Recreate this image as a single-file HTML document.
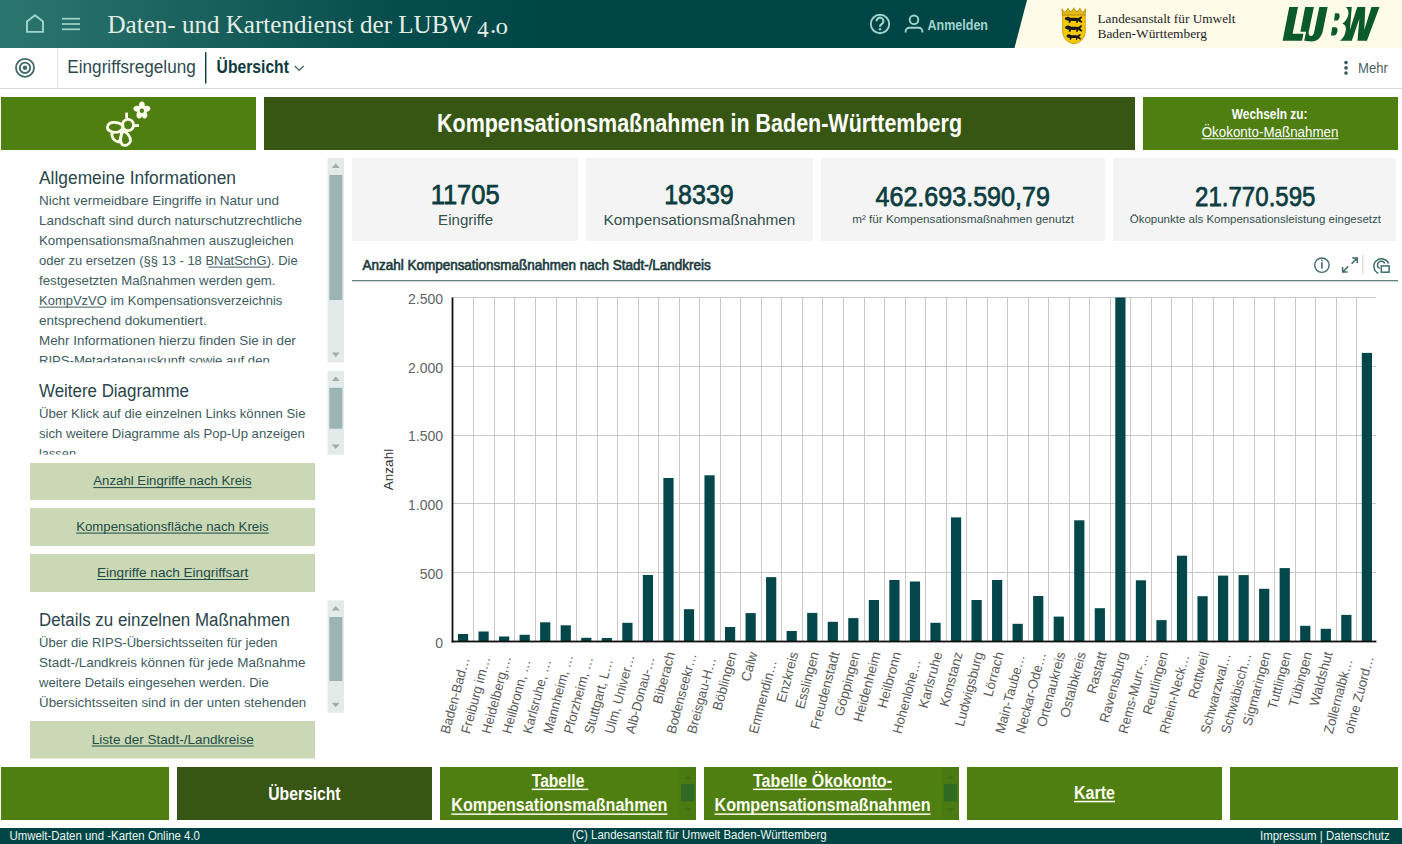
<!DOCTYPE html><html><head><meta charset="utf-8"><title>Kompensationsmaßnahmen</title>
<style>html,body{margin:0;padding:0;background:#fff;overflow:hidden}svg{display:block;font-family:"Liberation Sans",sans-serif}</style></head><body>
<svg width="1402" height="844" viewBox="0 0 1402 844">
<defs><linearGradient id="hg" x1="0" y1="0" x2="1402" y2="0" gradientUnits="userSpaceOnUse"><stop offset="0" stop-color="#2c7670"/><stop offset="0.143" stop-color="#1a605c"/><stop offset="0.285" stop-color="#064c4c"/><stop offset="0.42" stop-color="#004545"/><stop offset="1" stop-color="#004646"/></linearGradient><clipPath id="c1"><rect x="0" y="158" width="326" height="204.5"/></clipPath><clipPath id="c2"><rect x="0" y="371" width="326" height="83.5"/></clipPath><clipPath id="c3"><rect x="0" y="600.5" width="326" height="112"/></clipPath></defs>
<rect x="0" y="0" width="1402" height="844" fill="#ffffff"/>
<rect x="0" y="0" width="1402" height="48" fill="url(#hg)"/>
<polygon points="1027,0 1402,0 1402,48 1014.5,48" fill="#fffbe9"/>
<path d="M27,31.9 V21.4 L35,15.3 L43,21.4 V31.9 Z" fill="none" stroke="#a2d3cd" stroke-width="1.9" stroke-linejoin="miter"/>
<rect x="62" y="17.849999999999998" width="18" height="1.7" fill="#a2d3cd"/>
<rect x="62" y="23.15" width="18" height="1.7" fill="#a2d3cd"/>
<rect x="62" y="28.45" width="18" height="1.7" fill="#a2d3cd"/>
<text x="107.50" y="33.00" font-size="26" font-family="Liberation Serif" fill="#e4eee6" textLength="364.50" lengthAdjust="spacingAndGlyphs">Daten- und Kartendienst der LUBW</text>
<text x="477.20" y="37.30" font-size="22.5" font-family="Liberation Serif" fill="#e4eee6" textLength="11.40" lengthAdjust="spacingAndGlyphs">4</text>
<text x="490.00" y="33.30" font-size="25" font-family="Liberation Serif" fill="#e4eee6">.</text>
<text x="495.50" y="33.50" font-size="16.5" font-family="Liberation Serif" fill="#e4eee6" textLength="12.50" lengthAdjust="spacingAndGlyphs">0</text>
<circle cx="880" cy="24" r="9.2" fill="none" stroke="#a2d3cd" stroke-width="1.9"/>
<path d="M876.6,21.2 a3.4,3.4 0 1 1 5.2,2.8 c-1.3,0.8 -1.8,1.4 -1.8,2.8" fill="none" stroke="#a2d3cd" stroke-width="2.2"/>
<circle cx="880" cy="29.2" r="1.25" fill="#a2d3cd"/>
<circle cx="914" cy="19.8" r="4.3" fill="none" stroke="#a2d3cd" stroke-width="1.9"/>
<path d="M905.6,32.6 v-1.2 a3.6,3.6 0 0 1 3.6,-3.6 h9.6 a3.6,3.6 0 0 1 3.6,3.6 v1.2" fill="none" stroke="#a2d3cd" stroke-width="1.9"/>
<text x="927.50" y="29.50" font-size="15" font-weight="bold" fill="#a2d3cd" textLength="60.50" lengthAdjust="spacingAndGlyphs">Anmelden</text>
<g><path d="M1062.4,15.2 L1062,9.6 L1065,12.4 L1067.8,8.8 L1070.6,12 L1073.8,8.4 L1077,12 L1079.8,8.8 L1082.6,12.4 L1085.6,9.6 L1085.2,15.2 Z" fill="#e3b80f" stroke="#9c7a10" stroke-width="0.7"/><circle cx="1062.2" cy="9.4" r="0.9" fill="#d9ad10"/><circle cx="1067.8" cy="8.7" r="0.9" fill="#d9ad10"/><circle cx="1073.8" cy="8.3" r="0.9" fill="#d9ad10"/><circle cx="1079.8" cy="8.7" r="0.9" fill="#d9ad10"/><circle cx="1085.4" cy="9.4" r="0.9" fill="#d9ad10"/><path d="M1062.6,15.2 H1085.3 V31 C1085.3,38.2 1080,43.4 1074,43.7 C1068,43.4 1062.6,38.2 1062.6,31 Z" fill="#f6c800" stroke="#b88c00" stroke-width="0.7"/><path transform="translate(1064.6,16.4) scale(1.0,0.95)" d="M0.2,2.6 C0.4,1 1.8,0.2 3.4,0.3 C4.6,0.4 5.4,1 6,1.6 C8.5,1.4 11.5,1.6 13.8,1.8 C14.6,1.2 15.4,0.4 16.4,0 L17.8,0.6 C17.2,1.6 16.2,2.6 15.6,3.2 C16.2,4 17.2,4.8 18,5.6 L16.8,6.8 C15.6,6.2 14.6,5.4 13.6,4.8 L13,6.8 L11.4,6.8 L11.8,4.8 C9.5,4.9 7.8,4.8 6.4,4.6 L5.6,6.8 L3.8,6.8 L4.4,4.6 C2.2,4.4 0.2,3.8 0.2,2.6 Z" fill="#161616"/><path transform="translate(1064.9,25.3) scale(0.98,0.95)" d="M0.2,2.6 C0.4,1 1.8,0.2 3.4,0.3 C4.6,0.4 5.4,1 6,1.6 C8.5,1.4 11.5,1.6 13.8,1.8 C14.6,1.2 15.4,0.4 16.4,0 L17.8,0.6 C17.2,1.6 16.2,2.6 15.6,3.2 C16.2,4 17.2,4.8 18,5.6 L16.8,6.8 C15.6,6.2 14.6,5.4 13.6,4.8 L13,6.8 L11.4,6.8 L11.8,4.8 C9.5,4.9 7.8,4.8 6.4,4.6 L5.6,6.8 L3.8,6.8 L4.4,4.6 C2.2,4.4 0.2,3.8 0.2,2.6 Z" fill="#161616"/><path transform="translate(1066.4,34) scale(0.82,0.85)" d="M0.2,2.6 C0.4,1 1.8,0.2 3.4,0.3 C4.6,0.4 5.4,1 6,1.6 C8.5,1.4 11.5,1.6 13.8,1.8 C14.6,1.2 15.4,0.4 16.4,0 L17.8,0.6 C17.2,1.6 16.2,2.6 15.6,3.2 C16.2,4 17.2,4.8 18,5.6 L16.8,6.8 C15.6,6.2 14.6,5.4 13.6,4.8 L13,6.8 L11.4,6.8 L11.8,4.8 C9.5,4.9 7.8,4.8 6.4,4.6 L5.6,6.8 L3.8,6.8 L4.4,4.6 C2.2,4.4 0.2,3.8 0.2,2.6 Z" fill="#161616"/></g>
<text x="1097.50" y="23.00" font-size="13.5" font-family="Liberation Serif" fill="#1e1e1e" textLength="138.00" lengthAdjust="spacingAndGlyphs">Landesanstalt für Umwelt</text>
<text x="1097.50" y="37.80" font-size="13.5" font-family="Liberation Serif" fill="#1e1e1e" textLength="109.50" lengthAdjust="spacingAndGlyphs">Baden-Württemberg</text>
<g fill="#0b5a2c"><polygon points="1289.25,7.08 1298.02,7.08 1292.57,33.87 1303.47,33.87 1302.05,40.75 1282.61,40.75"/><path d="M1305.13,7.08 L1313.90,7.08 L1308.69,31.98 C1308.21,34.82 1309.40,36.01 1311.06,36.01 C1312.72,36.01 1313.66,34.35 1314.04,32.45 L1319.35,7.08 L1327.65,7.08 L1322.91,30.55 C1321.49,37.19 1317.93,41.46 1311.29,41.46 L1304.18,40.75 L1306.08,31.74 L1300.39,31.74 Z"/><path d="M1334.99,13.25 L1338.08,13.25 C1339.50,13.48 1339.98,15.38 1339.50,17.28 L1338.79,19.17 C1338.08,20.36 1336.89,20.60 1335.47,20.60 L1334.06,20.60 Z"/><path d="M1332.16,27.23 L1335.71,27.23 C1337.37,27.47 1337.85,29.60 1337.37,31.50 L1336.66,33.40 C1335.95,35.06 1334.53,35.53 1333.11,35.53 L1330.97,35.53 Z"/><path d="M1345.84,7.08 L1351.77,7.08 L1349.87,30.08 L1357.22,7.08 L1365.28,7.08 L1364.33,30.08 L1371.45,7.08 L1379.51,7.08 L1366.94,40.75 L1357.46,40.75 L1359.36,18.70 L1351.77,40.75 L1339.91,40.75 C1343.5,38.5 1346.2,33 1345.84,27.7 C1345.6,25.6 1344.2,24 1342.3,23.4 C1345.5,22 1348.6,17 1348.45,12.5 C1348.3,10 1347.2,8.2 1345.84,7.08 Z"/></g>
<rect x="0" y="88" width="1402" height="1" fill="#dadddd"/>
<rect x="57" y="48" width="1" height="40" fill="#dfe3e3"/>
<circle cx="25" cy="67.8" r="9" fill="none" stroke="#3f6a68" stroke-width="1.8"/>
<circle cx="25" cy="67.8" r="5.2" fill="none" stroke="#3f6a68" stroke-width="1.9"/>
<circle cx="25" cy="67.8" r="2.2" fill="#3f6a68"/>
<text x="67.30" y="73.00" font-size="18" fill="#2e4a50" textLength="128.50" lengthAdjust="spacingAndGlyphs">Eingriffsregelung</text>
<rect x="205" y="52.2" width="1.4" height="31.4" fill="#0d3b3f"/>
<text x="216.60" y="73.00" font-size="18" font-weight="bold" fill="#0f3a40" textLength="72.30" lengthAdjust="spacingAndGlyphs">Übersicht</text>
<path d="M294.8,66 L299.2,70.4 L303.6,66" fill="none" stroke="#3f5a5e" stroke-width="1.2"/>
<circle cx="1346" cy="62.6" r="1.8" fill="#3f5a5c"/>
<circle cx="1346" cy="67.9" r="1.8" fill="#3f5a5c"/>
<circle cx="1346" cy="73.1" r="1.8" fill="#3f5a5c"/>
<text x="1358.00" y="73.00" font-size="14" fill="#4b6064" textLength="29.80" lengthAdjust="spacingAndGlyphs">Mehr</text>
<rect x="1" y="97" width="255" height="53" fill="#4f7f10"/>
<rect x="264" y="97" width="871" height="53" fill="#375614"/>
<rect x="1143" y="97" width="255" height="53" fill="#4f7f10"/>
<text x="437.00" y="131.60" font-size="26" font-weight="bold" fill="#ffffff" textLength="525.00" lengthAdjust="spacingAndGlyphs">Kompensationsmaßnahmen in Baden-Württemberg</text>
<text x="1231.80" y="119.00" font-size="14" font-weight="bold" fill="#ffffff" textLength="75.60" lengthAdjust="spacingAndGlyphs">Wechseln zu:</text>
<text x="1201.70" y="136.60" font-size="14" fill="#ffffff" textLength="136.80" lengthAdjust="spacingAndGlyphs">Ökokonto-Maßnahmen</text>
<rect x="1201.70" y="138.30" width="136.80" height="1" fill="#ffffff"/>
<g fill="none" stroke="#fcfbec" stroke-width="2.8" stroke-linecap="butt"><circle cx="128" cy="125" r="5.6"/><line x1="126.6" y1="112.6" x2="126.6" y2="118.3"/><line x1="133.6" y1="125.6" x2="138.9" y2="125.6"/><path d="M123,125.5 C118,121.5 109,121 107.5,126.5 C106.5,131 113,133 118,132 C121,131.5 123,128.5 123,125.5 Z"/><path d="M112,131.5 C111,138 114.5,141.5 119,142 C121,139 122,133 121,129"/><path d="M123.5,131 C120.5,135 119.5,141 122,144.5 C125,146.5 129.5,145 130.5,141 C131,137.5 127,132 123.5,131 Z"/></g>
<g fill="#fcfbec"><path d="M141.9,101.6 C144,101.6 145,103.5 144.8,106.2 C147.5,105.3 150.3,106.3 150.4,108.6 C150.5,110.6 148.5,111.6 146.4,112 C147.8,114.3 147.8,117.4 145.3,118.4 C143.5,119 142.3,117.5 141.9,116 C141.5,117.5 140.3,119 138.5,118.4 C136,117.4 136,114.3 137.4,112 C135.3,111.6 133.3,110.6 133.4,108.6 C133.5,106.3 136.3,105.3 139,106.2 C138.8,103.5 139.8,101.6 141.9,101.6 Z"/></g>
<circle cx="141.9" cy="110.7" r="2.2" fill="#4f7f10"/>
<rect x="327.5" y="158" width="16.5" height="204.5" fill="#e3eaea"/>
<rect x="329.3" y="175" width="13" height="125" fill="#9db4b4"/>
<polygon points="331.75,168 339.75,168 335.75,163.5" fill="#a3abab"/>
<polygon points="331.75,352.5 339.75,352.5 335.75,357.0" fill="#a3abab"/>
<text x="39.00" y="184.00" font-size="18" fill="#2a454b" textLength="197.00" lengthAdjust="spacingAndGlyphs">Allgemeine Informationen</text>
<g clip-path="url(#c1)">
<text x="39.00" y="205.00" font-size="13" fill="#405c61" textLength="240.00" lengthAdjust="spacingAndGlyphs">Nicht vermeidbare Eingriffe in Natur und</text>
<text x="39.00" y="225.00" font-size="13" fill="#405c61" textLength="263.00" lengthAdjust="spacingAndGlyphs">Landschaft sind durch naturschutzrechtliche</text>
<text x="39.00" y="245.00" font-size="13" fill="#405c61" textLength="254.70" lengthAdjust="spacingAndGlyphs">Kompensationsmaßnahmen auszugleichen</text>
<text x="39.00" y="265.00" font-size="13" fill="#405c61" textLength="258.60" lengthAdjust="spacingAndGlyphs">oder zu ersetzen (§§ 13 - 18 BNatSchG). Die</text>
<text x="39.00" y="285.00" font-size="13" fill="#405c61" textLength="236.50" lengthAdjust="spacingAndGlyphs">festgesetzten Maßnahmen werden gem.</text>
<text x="39.00" y="305.00" font-size="13" fill="#405c61" textLength="243.30" lengthAdjust="spacingAndGlyphs">KompVzVO im Kompensationsverzeichnis</text>
<text x="39.00" y="325.00" font-size="13" fill="#405c61" textLength="167.70" lengthAdjust="spacingAndGlyphs">entsprechend dokumentiert.</text>
<text x="39.00" y="345.00" font-size="13" fill="#405c61" textLength="256.80" lengthAdjust="spacingAndGlyphs">Mehr Informationen hierzu finden Sie in der</text>
<text x="39.00" y="365.00" font-size="13" fill="#405c61" textLength="230.70" lengthAdjust="spacingAndGlyphs">RIPS-Metadatenauskunft sowie auf den</text>
</g>
<rect x="208.50" y="266.60" width="60.50" height="1" fill="#405c61"/>
<rect x="39.00" y="306.60" width="64.50" height="1" fill="#405c61"/>
<rect x="327.5" y="371" width="16.5" height="83.60000000000002" fill="#e3eaea"/>
<rect x="329.3" y="387.8" width="13" height="40.89999999999998" fill="#9db4b4"/>
<polygon points="331.75,381 339.75,381 335.75,376.5" fill="#a3abab"/>
<polygon points="331.75,444.6 339.75,444.6 335.75,449.1" fill="#a3abab"/>
<text x="39.00" y="397.00" font-size="18" fill="#2a454b" textLength="150.00" lengthAdjust="spacingAndGlyphs">Weitere Diagramme</text>
<g clip-path="url(#c2)">
<text x="39.00" y="418.40" font-size="13" fill="#405c61" textLength="266.50" lengthAdjust="spacingAndGlyphs">Über Klick auf die einzelnen Links können Sie</text>
<text x="39.00" y="438.40" font-size="13" fill="#405c61" textLength="265.80" lengthAdjust="spacingAndGlyphs">sich weitere Diagramme als Pop-Up anzeigen</text>
<text x="39.00" y="458.40" font-size="13" fill="#405c61" textLength="37.00" lengthAdjust="spacingAndGlyphs">lassen</text>
</g>
<rect x="30" y="463" width="285" height="37" fill="#cad8b5"/>
<text x="93.30" y="485.10" font-size="13" fill="#1f4c47" textLength="158.30" lengthAdjust="spacingAndGlyphs">Anzahl Eingriffe nach Kreis</text>
<rect x="93.30" y="487.10" width="158.30" height="1" fill="#1f4c47"/>
<rect x="30" y="508" width="285" height="38" fill="#cad8b5"/>
<text x="76.20" y="530.60" font-size="13" fill="#1f4c47" textLength="192.50" lengthAdjust="spacingAndGlyphs">Kompensationsfläche nach Kreis</text>
<rect x="76.20" y="532.60" width="192.50" height="1" fill="#1f4c47"/>
<rect x="30" y="554" width="285" height="38" fill="#cad8b5"/>
<text x="97.00" y="577.00" font-size="13" fill="#1f4c47" textLength="151.20" lengthAdjust="spacingAndGlyphs">Eingriffe nach Eingriffsart</text>
<rect x="97.00" y="579.00" width="151.20" height="1" fill="#1f4c47"/>
<rect x="327.5" y="600.5" width="16.5" height="112.29999999999995" fill="#e3eaea"/>
<rect x="329.3" y="617" width="13" height="64" fill="#9db4b4"/>
<polygon points="331.75,610.5 339.75,610.5 335.75,606.0" fill="#a3abab"/>
<polygon points="331.75,702.8 339.75,702.8 335.75,707.3" fill="#a3abab"/>
<text x="39.00" y="626.00" font-size="18" fill="#2a454b" textLength="250.80" lengthAdjust="spacingAndGlyphs">Details zu einzelnen Maßnahmen</text>
<g clip-path="url(#c3)">
<text x="39.00" y="647.20" font-size="13" fill="#405c61" textLength="238.50" lengthAdjust="spacingAndGlyphs">Über die RIPS-Übersichtsseiten für jeden</text>
<text x="39.00" y="667.20" font-size="13" fill="#405c61" textLength="266.40" lengthAdjust="spacingAndGlyphs">Stadt-/Landkreis können für jede Maßnahme</text>
<text x="39.00" y="687.20" font-size="13" fill="#405c61" textLength="229.70" lengthAdjust="spacingAndGlyphs">weitere Details eingesehen werden. Die</text>
<text x="39.00" y="707.20" font-size="13" fill="#405c61" textLength="267.30" lengthAdjust="spacingAndGlyphs">Übersichtsseiten sind in der unten stehenden</text>
<text x="39.00" y="727.20" font-size="13" fill="#405c61" textLength="80.00" lengthAdjust="spacingAndGlyphs">Liste verlinkt.</text>
</g>
<rect x="30" y="721" width="285" height="37.5" fill="#cad8b5"/>
<text x="91.80" y="743.50" font-size="13" fill="#1f4c47" textLength="161.90" lengthAdjust="spacingAndGlyphs">Liste der Stadt-/Landkreise</text>
<rect x="91.80" y="745.50" width="161.90" height="1" fill="#1f4c47"/>
<rect x="352" y="158" width="226" height="83" fill="#f4f4f4"/>
<rect x="586" y="158" width="227" height="83" fill="#f4f4f4"/>
<rect x="821" y="158" width="284" height="83" fill="#f4f4f4"/>
<rect x="1113" y="158" width="283" height="83" fill="#f4f4f4"/>
<text x="430.70" y="204.10" font-size="27.5" fill="#0b3d41" textLength="68.90" lengthAdjust="spacingAndGlyphs" stroke="#0b3d41" stroke-width="0.75">11705</text>
<text x="438.10" y="224.80" font-size="15.5" fill="#35504f" textLength="55.10" lengthAdjust="spacingAndGlyphs">Eingriffe</text>
<text x="664.20" y="204.10" font-size="27.5" fill="#0b3d41" textLength="69.50" lengthAdjust="spacingAndGlyphs" stroke="#0b3d41" stroke-width="0.75">18339</text>
<text x="603.60" y="224.80" font-size="15.5" fill="#35504f" textLength="191.70" lengthAdjust="spacingAndGlyphs">Kompensationsmaßnahmen</text>
<text x="875.50" y="206.20" font-size="27.5" fill="#0b3d41" textLength="174.40" lengthAdjust="spacingAndGlyphs" stroke="#0b3d41" stroke-width="0.75">462.693.590,79</text>
<text x="852.20" y="222.60" font-size="11.5" fill="#35504f" textLength="221.80" lengthAdjust="spacingAndGlyphs">m² für Kompensationsmaßnahmen genutzt</text>
<text x="1195.00" y="206.20" font-size="27.5" fill="#0b3d41" textLength="120.50" lengthAdjust="spacingAndGlyphs" stroke="#0b3d41" stroke-width="0.75">21.770.595</text>
<text x="1129.70" y="222.60" font-size="11.5" fill="#35504f" textLength="251.30" lengthAdjust="spacingAndGlyphs">Ökopunkte als Kompensationsleistung eingesetzt</text>
<text x="362.50" y="270.00" font-size="14" fill="#1d3c41" textLength="348.30" lengthAdjust="spacingAndGlyphs" stroke="#1d3c41" stroke-width="0.65">Anzahl Kompensationsmaßnahmen nach Stadt-/Landkreis</text>
<rect x="352" y="280" width="1046" height="1.3" fill="#65827f"/>
<circle cx="1321.9" cy="265.2" r="7.2" fill="none" stroke="#3f6b69" stroke-width="1.4"/>
<rect x="1321.1" y="262.2" width="1.6" height="6.4" fill="#3f6b69"/>
<rect x="1321.1" y="259.6" width="1.6" height="1.6" fill="#3f6b69"/>
<g fill="none" stroke="#3f6b69" stroke-width="1.5"><path d="M1351.6,263.7 L1357.2,258.1 M1352.2,258.1 H1357.2 V263.1"/><path d="M1348.2,266.4 L1342.6,272 M1342.6,267 V272 H1347.6"/></g>
<rect x="1362.3" y="254.7" width="1" height="19.7" fill="#c9d2d2"/>
<g fill="none" stroke="#3f6b69" stroke-width="1.5"><path d="M1378.3,273.2 A7.6,7.6 0 1 1 1388.6,263.6"/><path d="M1379.6,268.4 A3.8,3.8 0 1 1 1384.8,263.6"/></g>
<rect x="1381.3" y="265.9" width="7.8" height="6.3" fill="#fff" stroke="#3f6b69" stroke-width="1.5"/>
<rect x="452" y="572" width="924" height="1" fill="#c9c9c9"/>
<rect x="452" y="503" width="924" height="1" fill="#c9c9c9"/>
<rect x="452" y="435" width="924" height="1" fill="#c9c9c9"/>
<rect x="452" y="366" width="924" height="1" fill="#c9c9c9"/>
<rect x="452" y="297" width="924" height="1" fill="#c9c9c9"/>
<rect x="473" y="297" width="1" height="344" fill="#c9c9c9"/>
<rect x="494" y="297" width="1" height="344" fill="#c9c9c9"/>
<rect x="514" y="297" width="1" height="344" fill="#c9c9c9"/>
<rect x="535" y="297" width="1" height="344" fill="#c9c9c9"/>
<rect x="556" y="297" width="1" height="344" fill="#c9c9c9"/>
<rect x="576" y="297" width="1" height="344" fill="#c9c9c9"/>
<rect x="597" y="297" width="1" height="344" fill="#c9c9c9"/>
<rect x="617" y="297" width="1" height="344" fill="#c9c9c9"/>
<rect x="638" y="297" width="1" height="344" fill="#c9c9c9"/>
<rect x="658" y="297" width="1" height="344" fill="#c9c9c9"/>
<rect x="679" y="297" width="1" height="344" fill="#c9c9c9"/>
<rect x="699" y="297" width="1" height="344" fill="#c9c9c9"/>
<rect x="720" y="297" width="1" height="344" fill="#c9c9c9"/>
<rect x="740" y="297" width="1" height="344" fill="#c9c9c9"/>
<rect x="761" y="297" width="1" height="344" fill="#c9c9c9"/>
<rect x="781" y="297" width="1" height="344" fill="#c9c9c9"/>
<rect x="802" y="297" width="1" height="344" fill="#c9c9c9"/>
<rect x="822" y="297" width="1" height="344" fill="#c9c9c9"/>
<rect x="843" y="297" width="1" height="344" fill="#c9c9c9"/>
<rect x="864" y="297" width="1" height="344" fill="#c9c9c9"/>
<rect x="884" y="297" width="1" height="344" fill="#c9c9c9"/>
<rect x="905" y="297" width="1" height="344" fill="#c9c9c9"/>
<rect x="925" y="297" width="1" height="344" fill="#c9c9c9"/>
<rect x="946" y="297" width="1" height="344" fill="#c9c9c9"/>
<rect x="966" y="297" width="1" height="344" fill="#c9c9c9"/>
<rect x="987" y="297" width="1" height="344" fill="#c9c9c9"/>
<rect x="1007" y="297" width="1" height="344" fill="#c9c9c9"/>
<rect x="1028" y="297" width="1" height="344" fill="#c9c9c9"/>
<rect x="1048" y="297" width="1" height="344" fill="#c9c9c9"/>
<rect x="1069" y="297" width="1" height="344" fill="#c9c9c9"/>
<rect x="1089" y="297" width="1" height="344" fill="#c9c9c9"/>
<rect x="1110" y="297" width="1" height="344" fill="#c9c9c9"/>
<rect x="1130" y="297" width="1" height="344" fill="#c9c9c9"/>
<rect x="1151" y="297" width="1" height="344" fill="#c9c9c9"/>
<rect x="1171" y="297" width="1" height="344" fill="#c9c9c9"/>
<rect x="1192" y="297" width="1" height="344" fill="#c9c9c9"/>
<rect x="1213" y="297" width="1" height="344" fill="#c9c9c9"/>
<rect x="1233" y="297" width="1" height="344" fill="#c9c9c9"/>
<rect x="1254" y="297" width="1" height="344" fill="#c9c9c9"/>
<rect x="1274" y="297" width="1" height="344" fill="#c9c9c9"/>
<rect x="1295" y="297" width="1" height="344" fill="#c9c9c9"/>
<rect x="1315" y="297" width="1" height="344" fill="#c9c9c9"/>
<rect x="1336" y="297" width="1" height="344" fill="#c9c9c9"/>
<rect x="1356" y="297" width="1" height="344" fill="#c9c9c9"/>
<rect x="457.95" y="634.00" width="10.2" height="7.50" fill="#03474a"/>
<rect x="478.49" y="631.50" width="10.2" height="10.00" fill="#03474a"/>
<rect x="499.03" y="636.50" width="10.2" height="5.00" fill="#03474a"/>
<rect x="519.58" y="634.80" width="10.2" height="6.70" fill="#03474a"/>
<rect x="540.12" y="622.30" width="10.2" height="19.20" fill="#03474a"/>
<rect x="560.66" y="625.30" width="10.2" height="16.20" fill="#03474a"/>
<rect x="581.20" y="637.80" width="10.2" height="3.70" fill="#03474a"/>
<rect x="601.74" y="638.00" width="10.2" height="3.50" fill="#03474a"/>
<rect x="622.29" y="622.80" width="10.2" height="18.70" fill="#03474a"/>
<rect x="642.83" y="575.00" width="10.2" height="66.50" fill="#03474a"/>
<rect x="663.37" y="478.00" width="10.2" height="163.50" fill="#03474a"/>
<rect x="683.91" y="609.20" width="10.2" height="32.30" fill="#03474a"/>
<rect x="704.45" y="475.30" width="10.2" height="166.20" fill="#03474a"/>
<rect x="725.00" y="627.00" width="10.2" height="14.50" fill="#03474a"/>
<rect x="745.54" y="613.10" width="10.2" height="28.40" fill="#03474a"/>
<rect x="766.08" y="577.10" width="10.2" height="64.40" fill="#03474a"/>
<rect x="786.62" y="631.00" width="10.2" height="10.50" fill="#03474a"/>
<rect x="807.16" y="612.90" width="10.2" height="28.60" fill="#03474a"/>
<rect x="827.71" y="621.80" width="10.2" height="19.70" fill="#03474a"/>
<rect x="848.25" y="618.10" width="10.2" height="23.40" fill="#03474a"/>
<rect x="868.79" y="600.00" width="10.2" height="41.50" fill="#03474a"/>
<rect x="889.33" y="580.00" width="10.2" height="61.50" fill="#03474a"/>
<rect x="909.87" y="581.50" width="10.2" height="60.00" fill="#03474a"/>
<rect x="930.42" y="622.80" width="10.2" height="18.70" fill="#03474a"/>
<rect x="950.96" y="517.40" width="10.2" height="124.10" fill="#03474a"/>
<rect x="971.50" y="600.00" width="10.2" height="41.50" fill="#03474a"/>
<rect x="992.04" y="580.00" width="10.2" height="61.50" fill="#03474a"/>
<rect x="1012.58" y="623.80" width="10.2" height="17.70" fill="#03474a"/>
<rect x="1033.13" y="596.00" width="10.2" height="45.50" fill="#03474a"/>
<rect x="1053.67" y="616.60" width="10.2" height="24.90" fill="#03474a"/>
<rect x="1074.21" y="520.30" width="10.2" height="121.20" fill="#03474a"/>
<rect x="1094.75" y="608.20" width="10.2" height="33.30" fill="#03474a"/>
<rect x="1115.29" y="297.50" width="10.2" height="344.00" fill="#03474a"/>
<rect x="1135.84" y="580.30" width="10.2" height="61.20" fill="#03474a"/>
<rect x="1156.38" y="620.10" width="10.2" height="21.40" fill="#03474a"/>
<rect x="1176.92" y="555.70" width="10.2" height="85.80" fill="#03474a"/>
<rect x="1197.46" y="596.20" width="10.2" height="45.30" fill="#03474a"/>
<rect x="1218.00" y="575.60" width="10.2" height="65.90" fill="#03474a"/>
<rect x="1238.55" y="575.10" width="10.2" height="66.40" fill="#03474a"/>
<rect x="1259.09" y="588.80" width="10.2" height="52.70" fill="#03474a"/>
<rect x="1279.63" y="568.10" width="10.2" height="73.40" fill="#03474a"/>
<rect x="1300.17" y="625.80" width="10.2" height="15.70" fill="#03474a"/>
<rect x="1320.71" y="628.80" width="10.2" height="12.70" fill="#03474a"/>
<rect x="1341.26" y="614.90" width="10.2" height="26.60" fill="#03474a"/>
<rect x="1361.80" y="352.90" width="10.2" height="288.60" fill="#03474a"/>
<rect x="451.6" y="297.5" width="1.8" height="345.0" fill="#111"/>
<rect x="451.6" y="640.6" width="924.8000000000001" height="1.8" fill="#111"/>
<text x="443.00" y="303.80" font-size="14" text-anchor="end" fill="#646464">2.500</text>
<text x="443.00" y="372.60" font-size="14" text-anchor="end" fill="#646464">2.000</text>
<text x="443.00" y="441.40" font-size="14" text-anchor="end" fill="#646464">1.500</text>
<text x="443.00" y="510.20" font-size="14" text-anchor="end" fill="#646464">1.000</text>
<text x="443.00" y="579.00" font-size="14" text-anchor="end" fill="#646464">500</text>
<text x="443.00" y="647.80" font-size="14" text-anchor="end" fill="#646464">0</text>
<text transform="translate(393,469.5) rotate(-90)" text-anchor="middle" font-size="13.5" fill="#333">Anzahl</text>
<text transform="translate(449.25,734.5) rotate(-75)" font-size="13.5" fill="#5a5a5a" textLength="78.63" lengthAdjust="spacingAndGlyphs">Baden-Bad…</text>
<text transform="translate(469.79,734.5) rotate(-75)" font-size="13.5" fill="#5a5a5a" textLength="79.32" lengthAdjust="spacingAndGlyphs">Freiburg im…</text>
<text transform="translate(490.33,734.5) rotate(-75)" font-size="13.5" fill="#5a5a5a" textLength="80.07" lengthAdjust="spacingAndGlyphs">Heidelberg,…</text>
<text transform="translate(510.88,734.5) rotate(-75)" font-size="13.5" fill="#5a5a5a" textLength="76.44" lengthAdjust="spacingAndGlyphs">Heilbronn, …</text>
<text transform="translate(531.42,734.5) rotate(-75)" font-size="13.5" fill="#5a5a5a" textLength="76.42" lengthAdjust="spacingAndGlyphs">Karlsruhe, …</text>
<text transform="translate(551.96,734.5) rotate(-75)" font-size="13.5" fill="#5a5a5a" textLength="81.53" lengthAdjust="spacingAndGlyphs">Mannheim, …</text>
<text transform="translate(572.50,734.5) rotate(-75)" font-size="13.5" fill="#5a5a5a" textLength="79.33" lengthAdjust="spacingAndGlyphs">Pforzheim, …</text>
<text transform="translate(593.04,734.5) rotate(-75)" font-size="13.5" fill="#5a5a5a" textLength="77.16" lengthAdjust="spacingAndGlyphs">Stuttgart, L…</text>
<text transform="translate(613.59,734.5) rotate(-75)" font-size="13.5" fill="#5a5a5a" textLength="81.50" lengthAdjust="spacingAndGlyphs">Ulm, Univer…</text>
<text transform="translate(634.13,734.5) rotate(-75)" font-size="13.5" fill="#5a5a5a" textLength="79.35" lengthAdjust="spacingAndGlyphs">Alb-Donau-…</text>
<text transform="translate(675.27,653.2) rotate(-75)" text-anchor="end" font-size="13.5" fill="#5a5a5a">Biberach</text>
<text transform="translate(675.21,734.5) rotate(-75)" font-size="13.5" fill="#5a5a5a" textLength="82.99" lengthAdjust="spacingAndGlyphs">Bodenseekr…</text>
<text transform="translate(695.75,734.5) rotate(-75)" font-size="13.5" fill="#5a5a5a" textLength="78.60" lengthAdjust="spacingAndGlyphs">Breisgau-H…</text>
<text transform="translate(736.90,653.2) rotate(-75)" text-anchor="end" font-size="13.5" fill="#5a5a5a">Böblingen</text>
<text transform="translate(757.44,653.2) rotate(-75)" text-anchor="end" font-size="13.5" fill="#5a5a5a">Calw</text>
<text transform="translate(757.38,734.5) rotate(-75)" font-size="13.5" fill="#5a5a5a" textLength="75.69" lengthAdjust="spacingAndGlyphs">Emmendin…</text>
<text transform="translate(798.52,653.2) rotate(-75)" text-anchor="end" font-size="13.5" fill="#5a5a5a">Enzkreis</text>
<text transform="translate(819.06,653.2) rotate(-75)" text-anchor="end" font-size="13.5" fill="#5a5a5a">Esslingen</text>
<text transform="translate(839.61,653.2) rotate(-75)" text-anchor="end" font-size="13.5" fill="#5a5a5a">Freudenstadt</text>
<text transform="translate(860.15,653.2) rotate(-75)" text-anchor="end" font-size="13.5" fill="#5a5a5a">Göppingen</text>
<text transform="translate(880.69,653.2) rotate(-75)" text-anchor="end" font-size="13.5" fill="#5a5a5a">Heidenheim</text>
<text transform="translate(901.23,653.2) rotate(-75)" text-anchor="end" font-size="13.5" fill="#5a5a5a">Heilbronn</text>
<text transform="translate(901.17,734.5) rotate(-75)" font-size="13.5" fill="#5a5a5a" textLength="76.45" lengthAdjust="spacingAndGlyphs">Hohenlohe…</text>
<text transform="translate(942.32,653.2) rotate(-75)" text-anchor="end" font-size="13.5" fill="#5a5a5a">Karlsruhe</text>
<text transform="translate(962.86,653.2) rotate(-75)" text-anchor="end" font-size="13.5" fill="#5a5a5a">Konstanz</text>
<text transform="translate(983.40,653.2) rotate(-75)" text-anchor="end" font-size="13.5" fill="#5a5a5a">Ludwigsburg</text>
<text transform="translate(1003.94,653.2) rotate(-75)" text-anchor="end" font-size="13.5" fill="#5a5a5a">Lörrach</text>
<text transform="translate(1003.88,734.5) rotate(-75)" font-size="13.5" fill="#5a5a5a" textLength="81.53" lengthAdjust="spacingAndGlyphs">Main-Taube…</text>
<text transform="translate(1024.43,734.5) rotate(-75)" font-size="13.5" fill="#5a5a5a" textLength="83.69" lengthAdjust="spacingAndGlyphs">Neckar-Ode…</text>
<text transform="translate(1065.57,653.2) rotate(-75)" text-anchor="end" font-size="13.5" fill="#5a5a5a">Ortenaukreis</text>
<text transform="translate(1086.11,653.2) rotate(-75)" text-anchor="end" font-size="13.5" fill="#5a5a5a">Ostalbkreis</text>
<text transform="translate(1106.65,653.2) rotate(-75)" text-anchor="end" font-size="13.5" fill="#5a5a5a">Rastatt</text>
<text transform="translate(1127.19,653.2) rotate(-75)" text-anchor="end" font-size="13.5" fill="#5a5a5a">Ravensburg</text>
<text transform="translate(1127.14,734.5) rotate(-75)" font-size="13.5" fill="#5a5a5a" textLength="82.94" lengthAdjust="spacingAndGlyphs">Rems-Murr-…</text>
<text transform="translate(1168.28,653.2) rotate(-75)" text-anchor="end" font-size="13.5" fill="#5a5a5a">Reutlingen</text>
<text transform="translate(1168.22,734.5) rotate(-75)" font-size="13.5" fill="#5a5a5a" textLength="81.51" lengthAdjust="spacingAndGlyphs">Rhein-Neck…</text>
<text transform="translate(1209.36,653.2) rotate(-75)" text-anchor="end" font-size="13.5" fill="#5a5a5a">Rottweil</text>
<text transform="translate(1209.30,734.5) rotate(-75)" font-size="13.5" fill="#5a5a5a" textLength="82.96" lengthAdjust="spacingAndGlyphs">Schwarzwal…</text>
<text transform="translate(1229.85,734.5) rotate(-75)" font-size="13.5" fill="#5a5a5a" textLength="82.98" lengthAdjust="spacingAndGlyphs">Schwäbisch…</text>
<text transform="translate(1270.99,653.2) rotate(-75)" text-anchor="end" font-size="13.5" fill="#5a5a5a">Sigmaringen</text>
<text transform="translate(1291.53,653.2) rotate(-75)" text-anchor="end" font-size="13.5" fill="#5a5a5a">Tuttlingen</text>
<text transform="translate(1312.07,653.2) rotate(-75)" text-anchor="end" font-size="13.5" fill="#5a5a5a">Tübingen</text>
<text transform="translate(1332.61,653.2) rotate(-75)" text-anchor="end" font-size="13.5" fill="#5a5a5a">Waldshut</text>
<text transform="translate(1332.56,734.5) rotate(-75)" font-size="13.5" fill="#5a5a5a" textLength="77.14" lengthAdjust="spacingAndGlyphs">Zollernalbk…</text>
<text transform="translate(1353.10,734.5) rotate(-75)" font-size="13.5" fill="#5a5a5a" textLength="80.08" lengthAdjust="spacingAndGlyphs">ohne Zuord…</text>
<rect x="1" y="767" width="168" height="53" fill="#4f7f10"/>
<rect x="177" y="767" width="255" height="53" fill="#375614"/>
<rect x="440" y="767" width="256" height="53" fill="#4f7f10"/>
<rect x="704" y="767" width="255" height="53" fill="#4f7f10"/>
<rect x="967" y="767" width="255" height="53" fill="#4f7f10"/>
<rect x="1230" y="767" width="168" height="53" fill="#4f7f10"/>
<text x="268.30" y="799.70" font-size="19" font-weight="bold" fill="#ffffff" textLength="72.30" lengthAdjust="spacingAndGlyphs">Übersicht</text>
<text x="531.80" y="786.50" font-size="18" font-weight="bold" fill="#fdfdf0" textLength="52.50" lengthAdjust="spacingAndGlyphs">Tabelle</text>
<rect x="531.80" y="788.60" width="56.50" height="1.5" fill="#fdfdf0"/>
<text x="451.30" y="811.30" font-size="18" font-weight="bold" fill="#fdfdf0" textLength="216.10" lengthAdjust="spacingAndGlyphs">Kompensationsmaßnahmen</text>
<rect x="451.30" y="813.40" width="216.10" height="1.5" fill="#fdfdf0"/>
<text x="753.00" y="786.50" font-size="18" font-weight="bold" fill="#fdfdf0" textLength="139.00" lengthAdjust="spacingAndGlyphs">Tabelle Ökokonto-</text>
<rect x="753.00" y="788.60" width="139.00" height="1.5" fill="#fdfdf0"/>
<text x="714.50" y="811.30" font-size="18" font-weight="bold" fill="#fdfdf0" textLength="216.10" lengthAdjust="spacingAndGlyphs">Kompensationsmaßnahmen</text>
<rect x="714.50" y="813.40" width="216.10" height="1.5" fill="#fdfdf0"/>
<text x="1074.00" y="798.70" font-size="18" font-weight="bold" fill="#fdfdf0" textLength="41.00" lengthAdjust="spacingAndGlyphs">Karte</text>
<rect x="1074.00" y="800.80" width="41.00" height="1.5" fill="#fdfdf0"/>
<rect x="679.5" y="767" width="16.5" height="53" fill="#4a7a12"/>
<rect x="681.0" y="784" width="13" height="17.5" fill="#2f6a22"/>
<polygon points="683.75,779 691.75,779 687.75,775" fill="#3f7016"/>
<polygon points="683.75,808 691.75,808 687.75,812" fill="#3f7016"/>
<rect x="942.3" y="767" width="16.5" height="53" fill="#4a7a12"/>
<rect x="943.8" y="784" width="13" height="17.5" fill="#2f6a22"/>
<polygon points="946.55,779 954.55,779 950.55,775" fill="#3f7016"/>
<polygon points="946.55,808 954.55,808 950.55,812" fill="#3f7016"/>
<rect x="0" y="828" width="1402" height="16" fill="#004545"/>
<text x="9.40" y="839.60" font-size="12" fill="#eaf5f1" textLength="190.60" lengthAdjust="spacingAndGlyphs">Umwelt-Daten und -Karten Online 4.0</text>
<text x="572.00" y="839.30" font-size="12" fill="#eaf5f1" textLength="254.60" lengthAdjust="spacingAndGlyphs">(C) Landesanstalt für Umwelt Baden-Württemberg</text>
<text x="1260.00" y="839.60" font-size="12" fill="#eaf5f1" textLength="129.70" lengthAdjust="spacingAndGlyphs">Impressum | Datenschutz</text>
</svg></body></html>
